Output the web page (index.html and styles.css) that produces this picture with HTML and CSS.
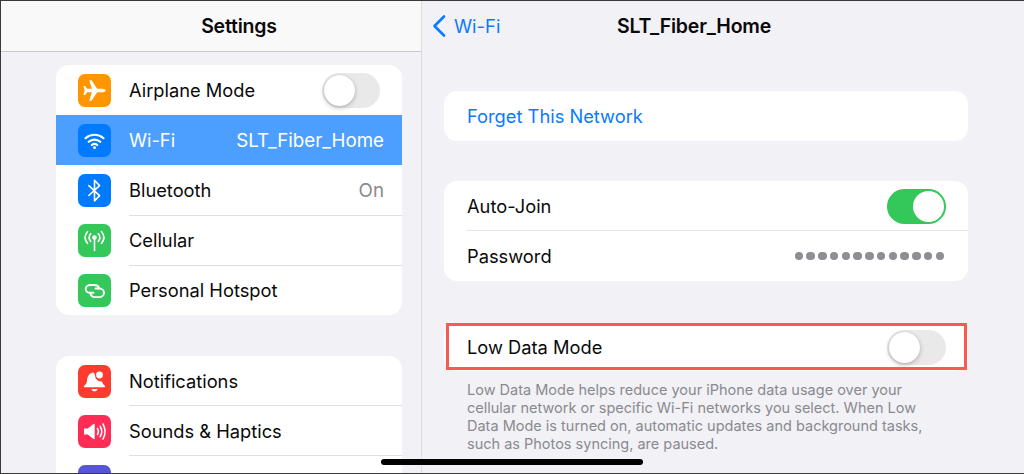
FILE: index.html
```html
<!DOCTYPE html>
<html lang="en">
<head>
<meta charset="utf-8">
<title>Low Data Mode</title>
<link rel="stylesheet" href="styles.css">
</head>
<body>
<div class="frame">
  <aside class="sidebar">
    <header class="side-head"><h1 class="title">Settings</h1></header>
    <div class="side-scroll">
      <section class="card side-card">
        <div class="row">
          <span class="icon orange"><svg viewBox="0 0 33 33"><path d="M27.500 16.500c0-1.100-1.600-1.800-3.200-1.800h-5.100L13.600 6.300h-2.400l2.700 8.400H9.100L7 12.100H5.500l1.100 4.400-1.100 4.400H7l2.100-2.600h4.800l-2.700 8.400h2.400l5.600-8.400h5.100c1.600 0 3.200-.7 3.200-1.800z"/></svg></span>
          <div class="row-body"><span class="label">Airplane Mode</span><span class="toggle"></span></div>
        </div>
        <div class="row selected">
          <span class="icon blue"><svg viewBox="0 0 33 33" class="line"><path d="M7.500 14.200c5.200-4.600 12.800-4.600 18 0"/><path d="M10.700 17.800c3.400-3 8.200-3 11.600 0"/><path d="M13.800 21c1.700-1.300 3.700-1.300 5.400 0"/><circle class="fill" cx="16.500" cy="23.700" r="1.400"/></svg></span>
          <div class="row-body"><span class="label">Wi-Fi</span><span class="value">SLT_Fiber_Home</span></div>
        </div>
        <div class="row">
          <span class="icon blue"><svg viewBox="0 0 33 33" class="line thin"><path d="M10.800 11.700l10.800 9.900-5.100 5.300V6.300l5.100 5.300-10.800 9.900"/></svg></span>
          <div class="row-body sep"><span class="label">Bluetooth</span><span class="value muted">On</span></div>
        </div>
        <div class="row">
          <span class="icon green"><svg viewBox="0 0 33 33" class="line thin"><circle class="fill" cx="16.500" cy="13.500" r="2.300"/><path d="M16.500 14v12.500"/><path d="M12.800 9.500c-2 2.400-2 5.600 0 8"/><path d="M20.200 9.500c2 2.400 2 5.600 0 8"/><path d="M9.600 7.500c-3.200 3.800-3.200 8.200 0 12"/><path d="M23.400 7.500c3.200 3.800 3.200 8.200 0 12"/></svg></span>
          <div class="row-body sep"><span class="label">Cellular</span></div>
        </div>
        <div class="row">
          <span class="icon green"><svg viewBox="0 0 33 33" class="line link-icon"><path d="M15.500 18.800h-3c-2.800 0-4.800-1.700-4.800-3.900s2-3.900 4.800-3.900H16c2.800 0 4.800 1.500 4.800 3.500"/><path d="M17.500 14.500H21c2.900 0 5 1.800 5 4.200s-2.100 4.400-5 4.400h-4c-2.700 0-4.500-1.600-4.500-3.800"/></svg></span>
          <div class="row-body"><span class="label">Personal Hotspot</span></div>
        </div>
      </section>
      <section class="card side-card second">
        <div class="row">
          <span class="icon red"><svg viewBox="0 0 33 33"><path d="M15.500 7.500c-4.500.6-6.200 4.200-6.500 8-.2 2.500-1 3.800-2.800 5.300-.6.500-.3 1.400.5 1.400h19.600c.8 0 1.100-.9.500-1.400-1.500-1.300-2.400-2.500-2.700-4.300-3.500.3-6.500-2-7-5.300-.1-1.400-.9-3.700-1.600-3.700z"/><circle cx="21.500" cy="10" r="3.400"/><path d="M13.500 24h6c-.4 1.500-1.500 2.300-3 2.300s-2.600-.8-3-2.300z"/></svg></span>
          <div class="row-body sep"><span class="label">Notifications</span></div>
        </div>
        <div class="row">
          <span class="icon pink"><svg viewBox="0 0 33 33"><path d="M6 13.500h3.800L15.500 9c.6-.4 1.200 0 1.200.6v13.800c0 .6-.6 1-1.200.6l-5.700-4.500H6z"/><g class="line thin"><path d="M19.500 13.500c1.200 2 1.200 4 0 6"/><path d="M22.200 11.300c2 3.400 2 7 0 10.400"/><path d="M25 9c2.700 4.800 2.700 10.200 0 15"/></g></svg></span>
          <div class="row-body sep"><span class="label">Sounds &amp; Haptics</span></div>
        </div>
        <div class="row">
          <span class="icon purple"></span>
          <div class="row-body"></div>
        </div>
      </section>
    </div>
  </aside>
  <main class="detail">
    <header class="nav">
      <span class="back"><svg class="chevron" viewBox="0 0 14 24"><path d="M12 2.500L2.500 12 12 21.500"/></svg>Wi-Fi</span>
      <h2 class="title nav-title">SLT_Fiber_Home</h2>
    </header>
    <section class="card detail-card first">
      <div class="drow"><span class="label link">Forget This Network</span></div>
    </section>
    <section class="card detail-card">
      <div class="drow"><div class="drow-body sep"><span class="label">Auto-Join</span><span class="toggle on"></span></div></div>
      <div class="drow"><div class="drow-body"><span class="label">Password</span>
        <span class="dots"><i></i><i></i><i></i><i></i><i></i><i></i><i></i><i></i><i></i><i></i><i></i><i></i><i></i></span></div></div>
    </section>
    <section class="card detail-card low">
      <div class="drow"><div class="drow-body"><span class="label">Low Data Mode</span><span class="toggle"></span></div></div>
    </section>
    <p class="caption">Low Data Mode helps reduce your iPhone data usage over your cellular network or specific Wi-Fi networks you select. When Low Data Mode is turned on, automatic updates and background tasks, such as Photos syncing, are paused.</p>
  </main>
  <div class="home-bar"></div>
</div>
</body>
</html>
```
FILE: styles.css
```css
* { box-sizing: border-box; }
html, body { margin: 0; height: 100%; overflow: hidden; }
body { font-family: "Inter", "Liberation Sans", sans-serif; color: #0a0a0a; background: #f2f2f7; }
.frame { position: relative; display: flex; width: 1024px; height: 474px; overflow: hidden; border-top: 1px solid #3a3a3c; border-bottom: 1px solid #3a3a3c; border-left: 1px solid #3a3a3c; background: #f1f1f6; }

.sidebar { width: 421px; flex: none; display: flex; flex-direction: column; border-right: 1px solid #dcdce0; background: #f1f1f6; }
.side-head { height: 51px; flex: none; display: flex; align-items: center; justify-content: center; padding: 0 0 1px 56px; background: #f9f9fa; border-bottom: 1px solid #c9c9cb; }
.title { margin: 0; font-size: 19.5px; font-weight: 600; letter-spacing: -0.2px; }
.side-scroll { flex: 1; overflow: hidden; padding: 13px 19px 0 55px; }
.card { background: #fff; border-radius: 13px; overflow: hidden; }
.side-card.second { margin-top: 41px; }

.row { display: flex; height: 50px; align-items: center; }
.row.selected { background: #4c9ffe; color: #fff; }
.icon { width: 33px; height: 33px; flex: none; margin: 0 18px 0 22px; border-radius: 7px; }
.icon svg { display: block; width: 33px; height: 33px; fill: #fff; }
.line path, .line { fill: none; stroke: #fff; stroke-width: 2.2; stroke-linecap: round; stroke-linejoin: round; }
.thin, .thin path { stroke-width: 1.6; }
.link-icon path { stroke-width: 1.9; }
.line .fill { fill: #fff; stroke: none; }
.orange { background: #ff9500; }
.blue { background: #007aff; }
.green { background: #34c759; }
.red { background: #ff3b30; }
.pink { background: #ff2d55; }
.purple { background: #5856d6; }

.row-body { flex: 1; height: 50px; display: flex; align-items: center; justify-content: space-between; padding-right: 18px; }
.row-body.sep { box-shadow: 0 1px 0 #dfdfe1; }
.second .row-body.sep { box-shadow: inset 0 -1px 0 #dfdfe1; }
.row-body .toggle { margin-right: 4px; }
.label { font-size: 18.3px; white-space: nowrap; }
.value { font-size: 18.75px; white-space: nowrap; }
.value.muted { color: #8a8a8e; }

.toggle { position: relative; width: 58px; height: 35px; flex: none; border-radius: 18px; background: #e9e9ea; }
.toggle::after { content: ""; position: absolute; top: 2px; left: 2px; width: 31px; height: 31px; border-radius: 50%; background: #fff; box-shadow: 0 2px 5px rgba(0,0,0,.22), 0 0 1px rgba(0,0,0,.2); }
.toggle.on { background: #34c759; }
.toggle.on::after { left: 26px; box-shadow: none; }
.drow-body .toggle { width: 59px; margin-right: 0; }

.detail { flex: 1; min-width: 0; }
.nav { position: relative; height: 51px; display: flex; align-items: center; justify-content: center; }
.back { position: absolute; left: 10px; top: 0; height: 50px; display: flex; align-items: center; gap: 8px; font-size: 18.4px; color: #0a7aff; }
.chevron { width: 14px; height: 24px; fill: none; stroke: #0a7aff; stroke-width: 2.6; stroke-linecap: round; stroke-linejoin: round; }
.nav-title { padding: 0 58px 1px 0; }
.detail-card { width: 524px; margin: 40px 0 0 22px; }
.detail-card.first { margin-top: 39px; }
.drow { height: 50px; display: flex; align-items: center; padding-left: 23px; }
.drow-body { flex: 1; height: 50px; display: flex; align-items: center; justify-content: space-between; padding-right: 22px; }
.drow-body.sep { box-shadow: inset 0 -1px 0 #e6e6e8; }
.link { color: #0a7aff; }
.dots { display: flex; gap: 3.25px; padding-right: 2px; }
.dots i { width: 8.5px; height: 8.5px; border-radius: 50%; background: #8e8e93; }

.low { position: relative; margin-top: 42px; height: 48px; overflow: visible; }
.low .drow { height: 48px; }
.low .drow-body { height: 48px; }
.low::after { content: ""; position: absolute; left: 2px; right: 1px; top: 0; bottom: 1px; border: 3px solid #f65a52; }
.caption { width: 470px; margin: 10px 0 0 45px; font-size: 14.5px; line-height: 18px; color: #8a8a8e; }

.home-bar { position: absolute; left: 380px; top: 458px; width: 262px; height: 6px; border-radius: 3px; background: #000; }
```
